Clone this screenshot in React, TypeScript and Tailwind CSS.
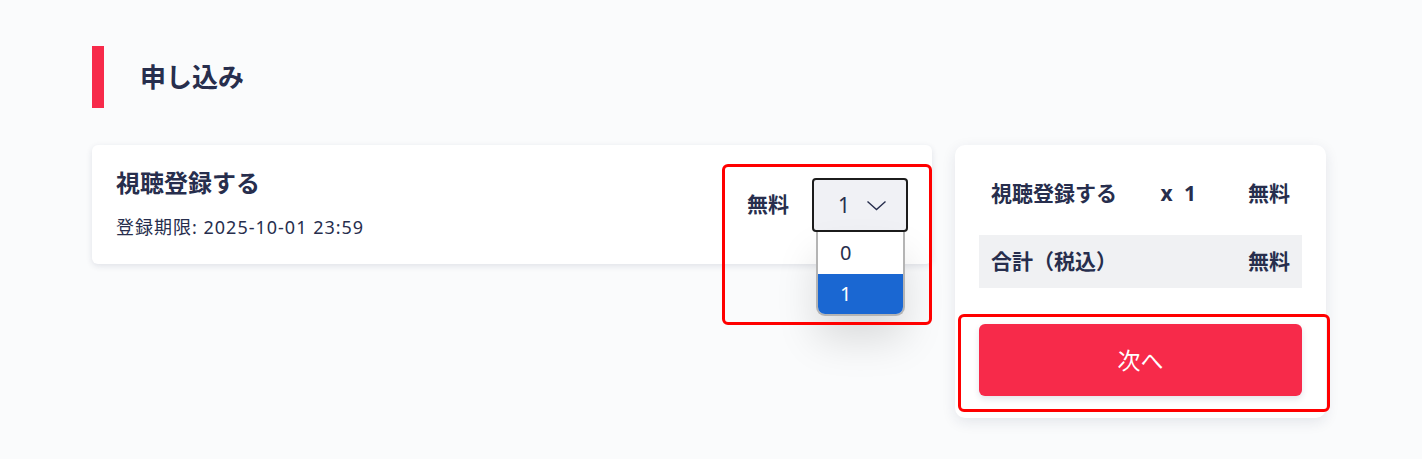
const font = { fontFamily: '"Noto Sans", "Noto Sans CJK JP", sans-serif' };

export default function App() {
  return (
    <main
      className="min-h-[459px] w-full bg-[#fafbfc] pl-[92px] pt-[46px] text-[#272e4d]"
      style={font}
    >
      {/* heading */}
      <div className="flex items-center">
        <div className="h-[62px] w-[12px] bg-[#f72a4a]" />
        <h1 className="ml-[36px] text-[26px] font-bold leading-none">申し込み</h1>
      </div>

      <div className="mt-[37px] flex items-start gap-[23px]">
        {/* item card */}
        <div className="relative flex h-[119px] w-[840px] justify-between rounded-[6px] bg-white pl-6 pr-6 shadow-[0_2px_6px_rgba(30,40,80,0.12)]">
          <div className="pt-[22px]">
            <div className="text-[24px] font-bold leading-[32px]">視聴登録する</div>
            <div className="mt-[15px] text-[18px] leading-[26px] tracking-[1px]">登録期限: 2025-10-01 23:59</div>
          </div>
          <div className="flex items-start gap-[23px] pt-[33px]">
            <span className="mt-[12px] text-[21px] font-bold leading-[28px]">無料</span>
            <div className="relative">
              <div className="flex h-[54px] w-[96px] items-center gap-[16px] rounded-[4px] border-2 border-[#1c1c1c] bg-[#f0f1f5] pl-[24px]">
                <span className="text-[21px] leading-none">1</span>
                <svg width="21" height="11" viewBox="0 0 21 11" fill="none" stroke="#272e4d" strokeWidth="1.4">
                  <polyline points="1.5,1.5 10.5,9.5 19.5,1.5" />
                </svg>
              </div>
              <div className="absolute left-[4px] top-[54px] z-10 w-[89px] overflow-hidden rounded-b-[9px] border-2 border-t-0 border-[#b4b4b4] bg-white text-[20px] shadow-[0_24px_40px_rgba(0,0,0,0.13)]">
                <div className="flex h-[42px] items-center pl-[22px]">0</div>
                <div className="flex h-[40px] items-center bg-[#1a67d2] pl-[22px] text-white">1</div>
              </div>
            </div>
          </div>
          {/* annotation */}
          <div className="pointer-events-none absolute left-[630px] top-[19px] z-20 h-[161px] w-[210px] rounded-[6px] border-[3px] border-[#ff0000]" />
        </div>

        {/* summary card */}
        <div className="relative h-[273px] w-[371px] rounded-[10px] bg-white px-6 pt-[25px] shadow-[0_4px_14px_rgba(30,40,80,0.1)]">
          <div className="flex h-[48px] items-center px-3 text-[21px] font-bold">
            <span className="flex-1">視聴登録する</span>
            <span className="tracking-[3px]">x 1</span>
            <span className="ml-[49px]">無料</span>
          </div>
          <div className="mt-[17px] flex h-[53px] items-center justify-between bg-[#f0f1f3] px-3 text-[21px] font-bold">
            <span>合計（税込）</span>
            <span>無料</span>
          </div>
          <button className="mt-[36px] flex h-[72px] w-full items-center justify-center rounded-[6px] bg-[#f72a4a] text-[23px] text-white shadow-[0_3px_6px_rgba(30,40,80,0.12)]">
            次へ
          </button>
          {/* annotation */}
          <div className="pointer-events-none absolute left-[3px] top-[169px] h-[98px] w-[372px] rounded-[6px] border-[3px] border-[#ff0000]" />
        </div>
      </div>
    </main>
  );
}
